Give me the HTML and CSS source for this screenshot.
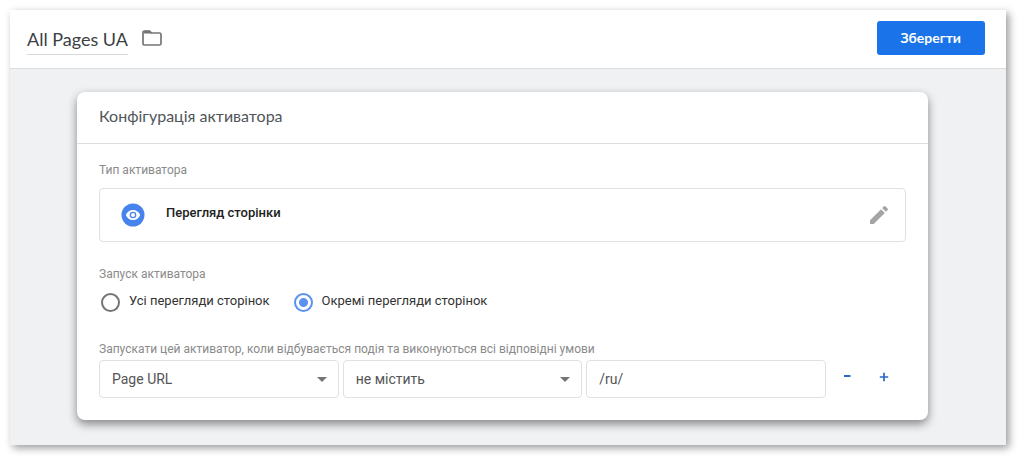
FILE: index.html
```html
<!DOCTYPE html>
<html lang="uk">
<head>
<meta charset="utf-8">
<meta name="viewport" content="width=device-width, initial-scale=1">
<title>All Pages UA</title>
<link rel="stylesheet" href="styles.css">
</head>
<body>
<div class="sheet">
  <header class="topbar">
    <h1 class="title">All Pages UA</h1>
    <button class="icon-button" type="button" aria-label="Папка">
      <svg width="20" height="16" viewBox="0 0 20 16"><path d="M2.600 1h5l1.800 2h8a1.600 1.600 0 0 1 1.600 1.600v8.800a1.600 1.600 0 0 1-1.600 1.600H2.600A1.600 1.600 0 0 1 1 13.400V2.600A1.600 1.600 0 0 1 2.600 1z" fill="none" stroke="#757575" stroke-width="1.700"/><path d="M2 .800h5.700l2 2.600H1.500z" fill="#757575"/></svg>
    </button>
    <button class="save" type="button">Зберегти</button>
  </header>
  <main class="content">
    <section class="card">
      <h2 class="card-title">Конфігурація активатора</h2>
      <div class="card-body">
        <h3 class="label">Тип активатора</h3>
        <button class="type" type="button">
          <svg class="type-icon" width="24" height="24" viewBox="0 0 24 24"><circle cx="12" cy="12" r="11.500" fill="#4683ec"/><path d="M12 7c-3.300 0-6.100 2-7.200 5 1.100 3 3.900 5 7.200 5s6.100-2 7.200-5c-1.100-3-3.900-5-7.200-5z" fill="#fff"/><circle cx="12" cy="12" r="3.300" fill="#4683ec"/><circle cx="12" cy="12" r="2" fill="#fff"/></svg>
          <span class="type-name">Перегляд сторінки</span>
          <svg width="24" height="24" viewBox="0 0 24 24"><path d="M3 17.250V21h3.750L17.810 9.940l-3.750-3.750L3 17.250zM20.710 7.040a1 1 0 0 0 0-1.410l-2.340-2.340a1 1 0 0 0-1.410 0l-1.830 1.830 3.750 3.750 1.830-1.830z" fill="#a5a5a5"/></svg>
        </button>
        <h3 class="label" id="fire">Запуск активатора</h3>
        <div class="radios" role="radiogroup" aria-labelledby="fire">
          <label class="radio"><input type="radio" name="fire"><span>Усі перегляди сторінок</span></label>
          <label class="radio"><input type="radio" name="fire" checked><span>Окремі перегляди сторінок</span></label>
        </div>
        <h3 class="label" id="cond">Запускати цей активатор, коли відбувається подія та виконуються всі відповідні умови</h3>
        <div class="conditions" role="group" aria-labelledby="cond">
          <div class="select">
            <select class="field" aria-label="Змінна"><option>Page URL</option></select>
            <svg class="arrow" width="10" height="5" viewBox="0 0 10 5"><path d="M0 0h10L5 5z" fill="#757575"/></svg>
          </div>
          <div class="select">
            <select class="field" aria-label="Оператор"><option>не містить</option></select>
            <svg class="arrow" width="10" height="5" viewBox="0 0 10 5"><path d="M0 0h10L5 5z" fill="#757575"/></svg>
          </div>
          <input class="field" type="text" value="/ru/" aria-label="Значення">
          <div class="actions">
            <button class="icon-button" type="button" aria-label="Видалити умову"><svg width="10" height="10" viewBox="0 0 10 10"><path d="M2 4h6.500" stroke="#2a69c8" stroke-width="2"/></svg></button>
            <button class="icon-button" type="button" aria-label="Додати умову"><svg width="10" height="10" viewBox="0 0 10 10"><path d="M.800 5h8.400M5 .800v8.400" stroke="#2a69c8" stroke-width="1.700"/></svg></button>
          </div>
        </div>
      </div>
    </section>
  </main>
</div>
</body>
</html>
```
FILE: styles.css
```css
* {
  box-sizing: border-box;
}

body {
  margin: 0;
  padding: 10px 18px 18px 10px;
  background: #fff;
  color: #3c4043;
  font-family: Roboto, "Noto Sans", sans-serif;
  font-size: 14px;
}

h1, h2, h3 {
  margin: 0;
  font-weight: 400;
}

button, input, select {
  margin: 0;
  font: inherit;
  color: inherit;
}

svg {
  display: block;
  flex: none;
}

.sheet {
  background: #f0f1f3;
  box-shadow: 3px 3px 8px rgba(0, 0, 0, .4);
}

.topbar {
  display: flex;
  align-items: center;
  gap: 14px;
  padding: 11px 21px 13px 17px;
  background: #fff;
  border-bottom: 1px solid #dadcde;
}

.title {
  padding: 6px 0 3px;
  border-bottom: 1px solid #d8d8d8;
  font-family: Lato, "Noto Sans", sans-serif;
  font-size: 18px;
  line-height: 24px;
}

.icon-button {
  padding: 0;
  border: 0;
  background: none;
}

.save {
  margin-left: auto;
  padding: 0 24px;
  border: 0;
  border-radius: 3px;
  background: #1a73e8;
  color: #fff;
  font-family: Lato, "Open Sans", sans-serif;
  font-size: 14px;
  font-weight: 700;
  line-height: 34px;
}

.content {
  padding: 23px 78px 25px 67px;
}

.card {
  border-radius: 8px;
  background: #fff;
  box-shadow: 0 4px 10px rgba(0, 0, 0, .45);
}

.card-title {
  padding: 12px 22px 15px;
  border-bottom: 1px solid #dedede;
  color: #50555a;
  font-family: Lato, "Open Sans", sans-serif;
  font-size: 16px;
  line-height: 24px;
}

.card-body {
  padding: 18px 22px 22px;
}

.label {
  color: #8a8a8a;
  font-size: 12px;
  line-height: 16px;
}

.type {
  display: flex;
  align-items: center;
  width: 100%;
  margin: 10px 0 24px;
  padding: 14px 14px 14px 21px;
  border: 1px solid #dfe1e3;
  border-radius: 4px;
  background: #fff;
  color: #212121;
  font-size: 13px;
  font-weight: 500;
  text-align: left;
}

.type-name {
  flex: 1;
  padding: 0 21px 4px;
  line-height: 20px;
}

.radios {
  display: flex;
  gap: 22px;
  margin: 11px 0 29px;
}

.radio {
  display: flex;
  align-items: center;
  gap: 9px;
  color: #333;
  font-size: 13px;
}

.radio span {
  padding-bottom: 3px;
  line-height: 16px;
}

.radio input {
  appearance: none;
  width: 19px;
  height: 19px;
  margin-left: 2px;
  border: 2px solid #757575;
  border-radius: 50%;
}

.radio input:checked {
  border-color: #5b92ee;
  background: radial-gradient(circle, #5b92ee 4px, #fff 5px);
}

.conditions {
  display: grid;
  grid-template-columns: 1fr 1fr 1fr 76px;
  gap: 4px;
  margin-top: 3px;
}

.select {
  position: relative;
}

.field {
  appearance: none;
  width: 100%;
  height: 38px;
  padding: 0 12px;
  border: 1px solid #dfe1e3;
  border-radius: 4px;
  background: #fff;
  color: #555;
  font-size: 14px;
}

.arrow {
  position: absolute;
  top: 17px;
  right: 12px;
  pointer-events: none;
}

.actions {
  display: flex;
  align-items: center;
  gap: 27px;
  padding: 0 0 4px 12px;
}
```
